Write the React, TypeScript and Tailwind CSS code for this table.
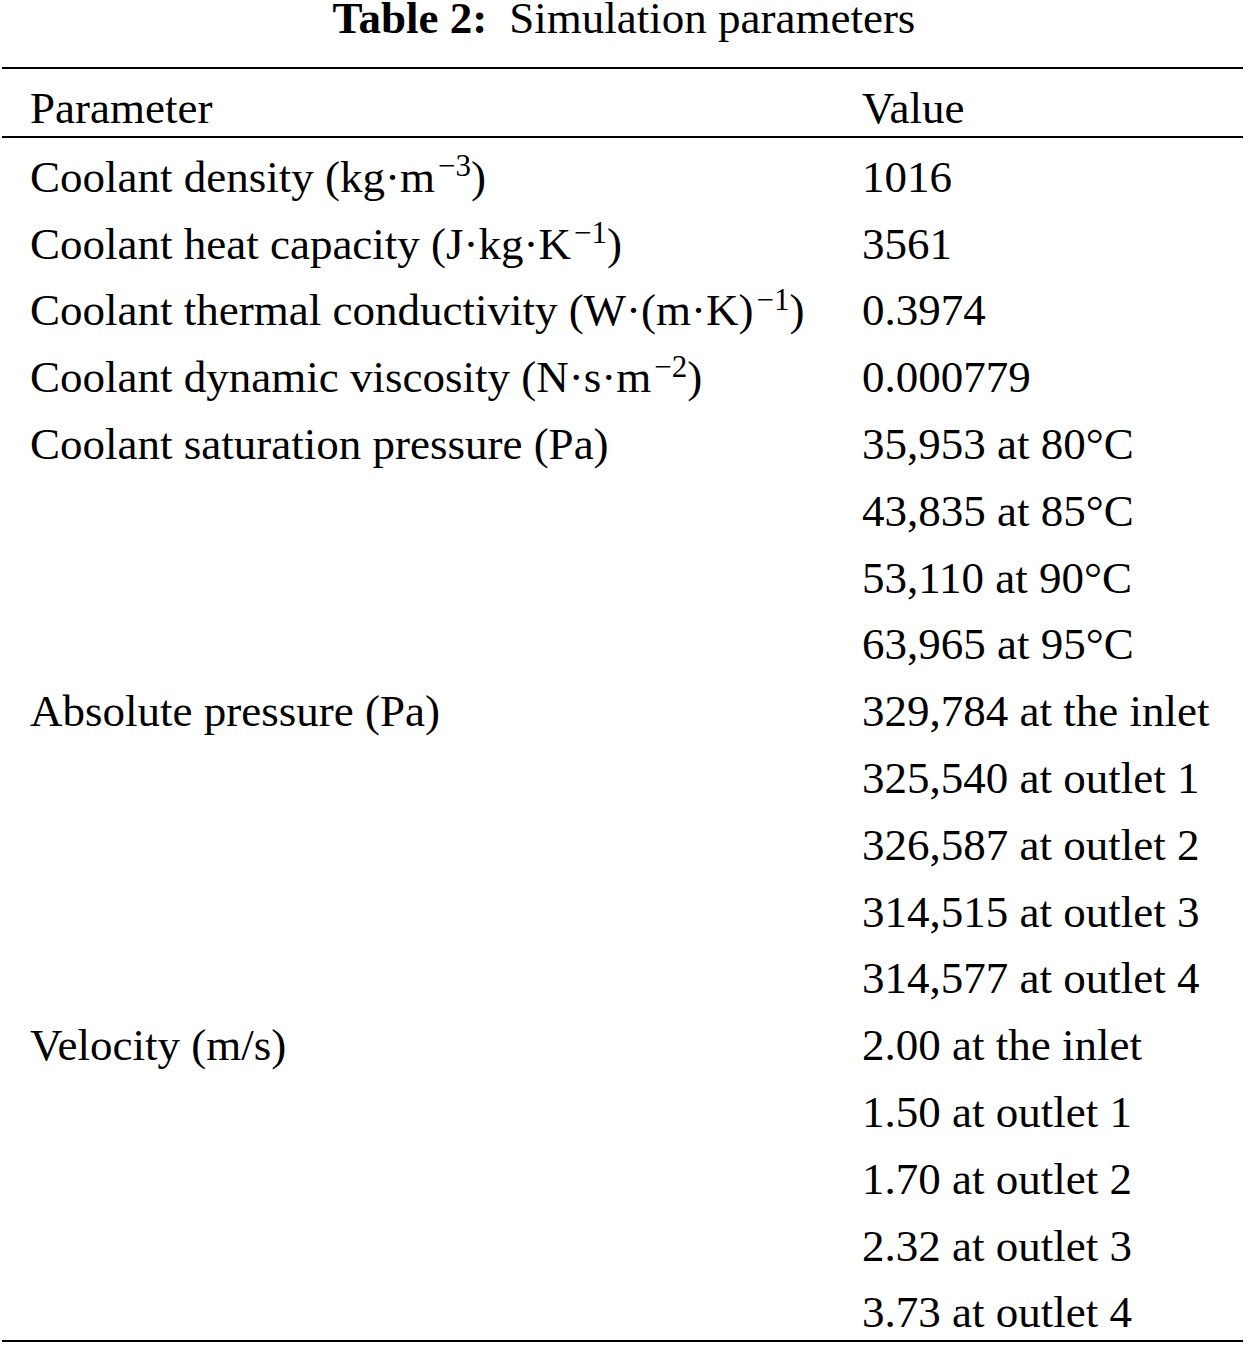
import React from 'react';

type Row = { param?: React.ReactNode; value: string };

const Sup: React.FC<{ children: React.ReactNode }> = ({ children }) => (
  <sup className="text-[31px] ml-[3px]">{children}</sup>
);

const rows: Row[] = [
  {
    param: (
      <>
        Coolant density (kg·m<Sup>−3</Sup>)
      </>
    ),
    value: '1016',
  },
  {
    param: (
      <>
        Coolant heat capacity (J·kg·K<Sup>−1</Sup>)
      </>
    ),
    value: '3561',
  },
  {
    param: (
      <>
        Coolant thermal conductivity (W·(m·K)<Sup>−1</Sup>)
      </>
    ),
    value: '0.3974',
  },
  {
    param: (
      <>
        Coolant dynamic viscosity (N·s·m<Sup>−2</Sup>)
      </>
    ),
    value: '0.000779',
  },
  { param: 'Coolant saturation pressure (Pa)', value: '35,953 at 80°C' },
  { value: '43,835 at 85°C' },
  { value: '53,110 at 90°C' },
  { value: '63,965 at 95°C' },
  { param: 'Absolute pressure (Pa)', value: '329,784 at the inlet' },
  { value: '325,540 at outlet 1' },
  { value: '326,587 at outlet 2' },
  { value: '314,515 at outlet 3' },
  { value: '314,577 at outlet 4' },
  { param: 'Velocity (m/s)', value: '2.00 at the inlet' },
  { value: '1.50 at outlet 1' },
  { value: '1.70 at outlet 2' },
  { value: '2.32 at outlet 3' },
  { value: '3.73 at outlet 4' },
];

const TableRow: React.FC<{ left?: React.ReactNode; right: React.ReactNode }> = ({ left, right }) => (
  <div className="grid grid-cols-[860px_1fr] h-[66.8px] pt-[14px] leading-[50px] whitespace-nowrap">
    <div className="pl-[28px]">{left}</div>
    <div>{right}</div>
  </div>
);

export default function App() {
  return (
    <div
      className="w-[1248px] h-[1347px] bg-white text-black text-[45px]"
      style={{ fontFamily: '"Liberation Serif", "Times New Roman", serif' }}
    >
      {/* caption */}
      <div className="text-center leading-[36px] whitespace-nowrap">
        <span className="font-bold">Table 2:</span>
        <span className="ml-[22px]">Simulation parameters</span>
      </div>

      <div className="ml-[2px] w-[1241px] mt-[31px] border-t-2 border-b-2 border-black">
        <div className="border-b-2 border-black">
          <TableRow left="Parameter" right="Value" />
        </div>
        {rows.map((r, i) => (
          <TableRow key={i} left={r.param} right={r.value} />
        ))}
      </div>
    </div>
  );
}
